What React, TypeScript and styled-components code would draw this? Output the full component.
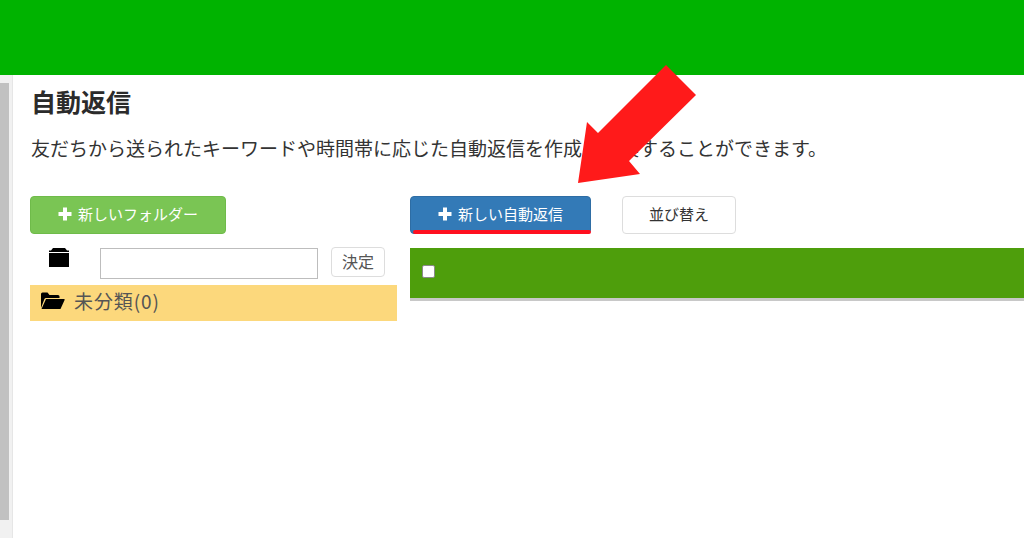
import React from 'react';
import styled, { createGlobalStyle } from 'styled-components';

const GlobalStyle = createGlobalStyle`
  html, body {
    margin: 0;
    padding: 0;
    height: 538px;
    overflow: hidden;
    background: #fff;
    font-family: "Noto Sans CJK JP", "Noto Sans", sans-serif;
    color: #333;
  }
  * {
    box-sizing: border-box;
  }
`;

const PlusIcon = () => (
  <svg width="14" height="14" viewBox="0 0 14 14">
    <path d="M5 0.500h4v4.500h4.500v4H9v4.500H5V9H0.500V5H5z" fill="#fff" />
  </svg>
);

const FolderIcon = () => (
  <svg width="22" height="21" viewBox="0 0 22 21">
    <path d="M1 6h20v14H1z M5 1h12l2 2.500h2V5H1V3.500h2z" fill="#000" />
  </svg>
);

const FolderOpenIcon = () => (
  <svg width="25" height="19" viewBox="0 0 25 19">
    <path
      d="M1 17V3q0-1.500 1.500-1.500h5L9.500 4H18q1.500 0 1.500 1.500V7H6q-1 0-1.600 1zM6 8h18q1 0 .6 1L20.500 18H1.500z"
      fill="#000"
    />
  </svg>
);

const App = () => {
  return (
    <Page>
      <GlobalStyle />
      <Header />
      <Body>
        <ScrollRail>
          <ScrollThumb />
        </ScrollRail>
        <Content>
          <Title>自動返信</Title>
          <Description>
            友だちから送られたキーワードや時間帯に応じた自動返信を作成・編集することができます。
          </Description>
          <Columns>
            <LeftColumn>
              <Button background="#7ac554" borderColor="#6fbb4a" color="#fff" width={196}>
                <PlusIcon />
                新しいフォルダー
              </Button>
              <FolderForm>
                <FolderIconBox>
                  <FolderIcon />
                </FolderIconBox>
                <NameInput />
                <SmallButton>決定</SmallButton>
              </FolderForm>
              <FolderRow>
                <FolderOpenIcon />
                未分類(0)
              </FolderRow>
            </LeftColumn>
            <RightColumn>
              <Toolbar>
                <Button background="#337ab7" borderColor="#2e6da4" color="#fff" width={181} underlined>
                  <PlusIcon />
                  新しい自動返信
                </Button>
                <Button background="#fff" borderColor="#ddd" color="#333" width={114}>
                  並び替え
                </Button>
              </Toolbar>
              <TableHead>
                <CheckBox />
              </TableHead>
            </RightColumn>
          </Columns>
        </Content>
      </Body>
      <Arrow viewBox="0 0 1024 538">
        <polygon
          points="666,65 696,95 629,161 640,174 578,183 587,122 598,133"
          fill="#ff1a1a"
        />
      </Arrow>
    </Page>
  );
};

export default App;

const Page = styled.div`
  position: relative;
  width: 1024px;
  height: 538px;
  overflow: hidden;
`;

const Header = styled.div`
  height: 75px;
  background: #00b300;
`;

const Body = styled.div`
  display: flex;
  height: 463px;
`;

const ScrollRail = styled.div`
  flex: none;
  width: 13px;
  padding-top: 8px;
  background: #f1f1f1;
  border-right: 1px solid #e6e6e6;
`;

const ScrollThumb = styled.div`
  width: 9px;
  height: 437px;
  background: #c1c1c1;
`;

const Content = styled.div`
  flex: none;
  width: 1100px;
  padding: 9px 0 0 17px;
`;

const Title = styled.h1`
  margin: 0 0 0 1px;
  height: 34px;
  font-size: 25px;
  line-height: 34px;
  font-weight: 700;
  color: #2b2b2b;
`;

const Description = styled.p`
  margin: 17px 0 0 1px;
  height: 26px;
  font-size: 19px;
  line-height: 26px;
  white-space: nowrap;
  color: #333;
`;

const Columns = styled.div`
  display: flex;
  gap: 13px;
  margin-top: 35px;
`;

const LeftColumn = styled.div`
  flex: none;
  width: 367px;
`;

const RightColumn = styled.div`
  flex: 1;
`;

const Button = styled.div<{
  background: string;
  borderColor: string;
  color: string;
  width: number;
  underlined?: boolean;
}>`
  position: relative;
  display: flex;
  align-items: center;
  justify-content: center;
  gap: 6px;
  width: ${({ width }) => width}px;
  height: 38px;
  padding-bottom: 2px;
  border: 1px solid ${({ borderColor }) => borderColor};
  border-radius: 4px;
  background: ${({ background }) => background};
  color: ${({ color }) => color};
  font-size: 15px;
  line-height: 20px;
  ${({ underlined }) =>
    underlined &&
    `
    &::after {
      content: '';
      position: absolute;
      left: 2px;
      right: -1px;
      bottom: -1px;
      height: 4px;
      border-radius: 2px;
      background: #ff0f1f;
    }
  `}
`;

const FolderForm = styled.div`
  display: flex;
  align-items: flex-start;
  height: 38px;
  margin-top: 13px;
`;

const FolderIconBox = styled.div`
  flex: none;
  width: 70px;
  padding: 0 0 0 18px;
`;

const NameInput = styled.input`
  flex: none;
  width: 218px;
  height: 31px;
  margin-top: 1px;
  border: 1px solid #bdbdbd;
  background: #fff;
`;

const SmallButton = styled.div`
  flex: none;
  width: 54px;
  height: 30px;
  margin-left: 13px;
  border: 1px solid #ddd;
  border-radius: 4px;
  background: #fff;
  font-size: 16px;
  line-height: 26px;
  text-align: center;
  color: #555;
`;

const FolderRow = styled.div`
  display: flex;
  align-items: center;
  gap: 9px;
  height: 36px;
  padding: 0 0 5px 10px;
  background: #fcd87c;
  font-size: 19px;
  letter-spacing: 0.9px;
  color: #555;
`;

const Toolbar = styled.div`
  display: flex;
  gap: 31px;
`;

const TableHead = styled.div`
  display: flex;
  align-items: center;
  height: 53px;
  margin-top: 14px;
  padding: 0 0 3px 12px;
  background: #4e9e0c;
  border-bottom: 3px solid #c8c8c8;
`;

const CheckBox = styled.div`
  width: 13px;
  height: 13px;
  border: 1px solid #8a8a8a;
  border-radius: 2px;
  background: #fff;
`;

const Arrow = styled.svg`
  position: absolute;
  left: 0;
  top: 0;
  width: 1024px;
  height: 538px;
  pointer-events: none;
`;
